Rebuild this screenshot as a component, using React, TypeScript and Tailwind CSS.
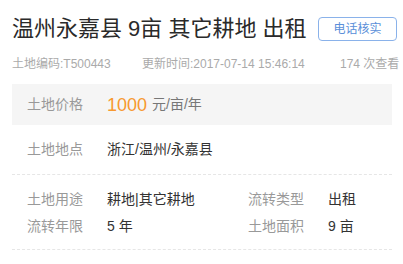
export default function App() {
  const font = { fontFamily: '"Liberation Sans", "Noto Sans CJK SC", sans-serif' };
  return (
    <div style={font} className="w-[403px] h-[264px] bg-white pl-[12px] pr-[11px] overflow-hidden">
      {/* Header */}
      <div className="mt-[16px] h-[26px] flex items-center justify-between">
        <h1 className="text-[22px] leading-[26px] text-[#2a2a2a] font-normal whitespace-nowrap">温州永嘉县 9亩 其它耕地 出租</h1>
        <button className="shrink-0 -mr-[5px] w-[79px] h-[24px] rounded-[4px] border border-[#8ab2ea] text-[12px] text-[#5b8fd9] leading-none flex items-center justify-center">
          电话核实
        </button>
      </div>

      {/* Meta */}
      <div className="mt-[14px] h-[16px] flex items-center text-[12px] leading-[16px] text-[#aaa] whitespace-nowrap">
        <span className="shrink-0 w-[130px]">土地编码:T500443</span>
        <span className="shrink-0 w-[198px]">更新时间:2017-07-14 15:46:14</span>
        <span className="shrink-0">174 次查看</span>
      </div>

      {/* Price */}
      <div className="mt-[12px] h-[41px] bg-[#f5f5f5] pl-[15px] flex items-center">
        <span className="w-[80px] text-[14px] text-[#999]">土地价格</span>
        <span className="text-[18px] leading-none text-[#f7992f]">1000</span>
        <span className="ml-[5px] text-[14px] text-[#777]">元/亩/年</span>
      </div>

      {/* Location */}
      <div className="h-[49px] pl-[15px] flex items-center text-[14px]">
        <span className="w-[80px] text-[#999]">土地地点</span>
        <span className="text-[#333]">浙江/温州/永嘉县</span>
      </div>

      {/* Details */}
      <div className="border-t border-b border-dashed border-[#e6e6e6] pt-[11px] pb-[9px] pl-[15px] text-[14px]">
        <div className="h-[27px] flex items-center">
          <span className="w-[80px] text-[#999]">土地用途</span>
          <span className="w-[141px] text-[#333]">耕地|其它耕地</span>
          <span className="w-[80px] text-[#999]">流转类型</span>
          <span className="text-[#333]">出租</span>
        </div>
        <div className="h-[27px] flex items-center">
          <span className="w-[80px] text-[#999]">流转年限</span>
          <span className="w-[141px] text-[#333]">5 年</span>
          <span className="w-[80px] text-[#999]">土地面积</span>
          <span className="text-[#333]">9 亩</span>
        </div>
      </div>
    </div>
  );
}
